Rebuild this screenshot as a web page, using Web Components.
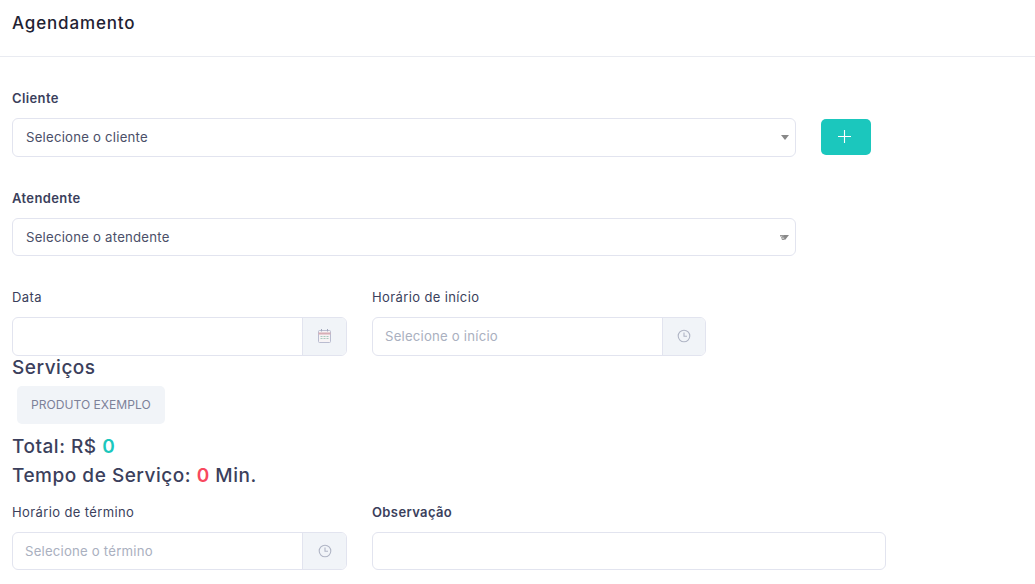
<!DOCTYPE html>
<html lang="pt"><head><meta charset="utf-8"><title>Agendamento</title>
<style>
html,body{margin:0;height:584px;overflow:hidden;background:#fff}
body{font-family:Inter,"Noto Sans",sans-serif;color:#3b3f5c}
</style></head><body>
<template id="t-page"><style>
:host{display:block}
header{box-sizing:content-box;height:43px;border-bottom:1px solid #e9ebf1;padding:13px 12px 0;font:500 17px/20px Inter,sans-serif;letter-spacing:.85px;color:#1f2233}
main{display:block;padding:31px 12px 0}
</style><header><slot name="title"></slot></header><main><slot></slot></main></template>
<template id="t-row"><style>:host{display:flex;gap:25px;align-items:flex-start}</style><slot></slot></template>
<template id="t-field"><style>
:host{display:block;width:var(--w,335px);flex:none}
.l{display:block;font:var(--lw,400) 13px/20px Inter,sans-serif;letter-spacing:.38px;color:#3b3f5c;margin-bottom:10px}
</style><span class="l"><slot name="label"></slot></span><slot></slot></template>
<template id="t-select"><style>
:host{display:flex;align-items:center;justify-content:space-between;box-sizing:border-box;height:38px;border:1px solid #e2e4ef;border-radius:6px;padding:0 6px 0 13px;font:400 13.2px/20px Inter,sans-serif;letter-spacing:.22px;color:#4b4f68;background:#fff}
svg{display:block}
.t{padding-bottom:1px}
.mark{display:none}
:host([marked]) .mark{display:inline}
</style><span class="t"><slot></slot></span><svg width="9" height="5" viewBox="0 0 9 5"><path d="M1 0h8L5 5z" fill="#888"/><path class="mark" d="M0 0h4v1.500H0zM1 2h3.500v3H2z" fill="#999"/><path class="mark" d="M2.200 2.700h1.500v1H2.500z" fill="#eee"/></svg></template>
<template id="t-input"><style>
:host{display:flex;box-sizing:border-box;height:38px;border:1px solid #e2e4ef;border-radius:6px;font:400 13.2px/20px Inter,sans-serif;letter-spacing:.2px;color:#aab0c0;background:#fff;overflow:hidden}
.v{flex:1;display:flex;align-items:center;padding:0 12px 1px;min-width:0}
</style><span class="v"><slot></slot></span><slot name="addon"></slot></template>
<template id="t-addon"><style>
:host{display:flex;align-items:center;justify-content:center;box-sizing:content-box;width:43px;flex:none;background:#f1f4f8;border-left:1px solid #e2e4ef;padding-bottom:1px}
</style><slot></slot></template>
<template id="t-btn"><style>
:host{display:flex;align-items:center;justify-content:center;box-sizing:border-box;width:50px;height:36px;margin-top:31px;flex:none;background:#1bc7bd;border-radius:5px;padding:0 3px 1px 0}
</style><svg width="13" height="13" viewBox="0 0 13 13"><path d="M6.500 0v13M0 6.500h13" stroke="#fff" stroke-width="1.100" fill="none"/></svg></template>
<template id="t-chip"><style>
:host{display:inline-block;background:#f1f4f8;border-radius:5px;padding:9px 14px;font:400 12.100px/20px Inter,sans-serif;color:#7d8198;margin-left:5px}
</style><slot></slot></template>
<template id="t-head"><style>
:host{display:block;font:450 19px/28px Inter,sans-serif;letter-spacing:.52px;color:#3b3f5c}
</style><slot></slot></template>
<template id="t-num"><style>
:host{font-weight:600;color:var(--c)}
</style><slot></slot></template>
<script>
for (const [n,t] of [["x-page","t-page"],["x-row","t-row"],["x-field","t-field"],["x-select","t-select"],["x-input","t-input"],["x-addon","t-addon"],["x-add-button","t-btn"],["x-chip","t-chip"],["x-head","t-head"],["x-num","t-num"]]) {
  customElements.define(n,class extends HTMLElement{constructor(){super();this.attachShadow({mode:"open"}).append(document.getElementById(t).content.cloneNode(true))}});
}
</script>
<x-page>
<span slot="title">Agendamento</span>
<x-row style="margin-bottom:31px">
  <x-field style="--w:784px;--lw:600"><span slot="label">Cliente</span><x-select style="height:39px">Selecione o cliente</x-select></x-field>
  <x-add-button role="button" aria-label="Adicionar"></x-add-button>
</x-row>
<x-row style="margin-bottom:31px">
  <x-field style="--w:784px;--lw:600"><span slot="label">Atendente</span><x-select marked>Selecione o atendente</x-select></x-field>
</x-row>
<x-row>
  <x-field><span slot="label">Data</span><x-input style="height:39px"><span></span><x-addon slot="addon"><svg width="13" height="14" viewBox="0 0 13 14" fill="none"><rect x=".5" y="1.500" width="12" height="12" rx="1" fill="#f7f3f5" stroke="#b9bcd0"/><path d="M.5 4.500h12" stroke="#d8aeb6" stroke-width="2"/><path d="M3.500 0v2.500M9.500 0v2.500" stroke="#a3a8bd"/><path d="M2.500 7.500h2M5.500 7.500h2M8.500 7.500h2M2.500 9.500h2M5.500 9.500h2M8.500 9.500h2" stroke="#a9c9bd"/></svg></x-addon></x-input></x-field>
  <x-field style="--w:334px"><span slot="label">Horário de início</span><x-input style="height:39px">Selecione o início<x-addon slot="addon" style="width:42px"><svg width="14" height="14" viewBox="0 0 14 14" fill="none" stroke="#b0b5c5" stroke-width="1.100"><circle cx="7" cy="7" r="5.800"/><path d="M7 3.500V7.300H10"/></svg></x-addon></x-input></x-field>
</x-row>
<x-head style="margin-top:-2px">Serviços</x-head>
<x-chip style="margin-top:4px">PRODUTO EXEMPLO</x-chip>
<x-head style="margin-top:9px">Total: R$ <x-num style="--c:#1bc7bd">0</x-num></x-head>
<x-head style="margin-top:1px;margin-bottom:12px">Tempo de Serviço: <x-num style="--c:#f8485e">0</x-num> Min.</x-head>
<x-row>
  <x-field><span slot="label">Horário de término</span><x-input>Selecione o término<x-addon slot="addon"><svg width="14" height="14" viewBox="0 0 14 14" fill="none" stroke="#b0b5c5" stroke-width="1.100"><circle cx="7" cy="7" r="5.800"/><path d="M7 3.500V7.300H10"/></svg></x-addon></x-input></x-field>
  <x-field style="--w:514px;--lw:600"><span slot="label">Observação</span><x-input></x-input></x-field>
</x-row>
</x-page>
</body></html>
